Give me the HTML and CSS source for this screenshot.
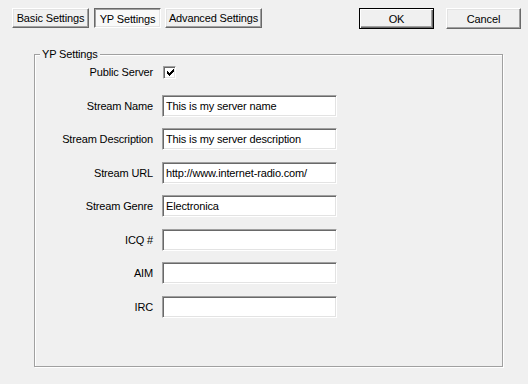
FILE: index.html
```
<html>
	<head>
		<link rel="stylesheet" href="styles.css">
	</head>
	<body>
		<div class="topbar">
			<div class="tabs">
				<button class="btn tab tabBasic">Basic Settings</button>
				<button class="btn tab tabYp pressed">YP Settings</button>
				<button class="btn tab tabAdv">Advanced Settings</button>
			</div>
			<div class="actions">
				<button class="btn action default">OK</button>
				<button class="btn action">Cancel</button>
			</div>
		</div>
		<fieldset class="group">
			<legend>YP Settings</legend>
			<div class="form">
				<label>Public Server</label>
				<div class="checkCell">
					<span class="check">
						<svg width="7" height="7" viewBox="0 0 7 7" shape-rendering="crispEdges">
							<rect x="6" y="0" width="1" height="3" fill="#000"/>
							<rect x="5" y="1" width="1" height="3" fill="#000"/>
							<rect x="4" y="2" width="1" height="3" fill="#000"/>
							<rect x="3" y="3" width="1" height="3" fill="#000"/>
							<rect x="2" y="4" width="1" height="3" fill="#000"/>
							<rect x="1" y="3" width="1" height="3" fill="#000"/>
							<rect x="0" y="2" width="1" height="3" fill="#000"/>
						</svg>
					</span>
				</div>
				<label>Stream Name</label>
				<input class="field" value="This is my server name">
				<label>Stream Description</label>
				<input class="field" value="This is my server description">
				<label>Stream URL</label>
				<input class="field" value="http://www.internet-radio.com/">
				<label>Stream Genre</label>
				<input class="field" value="Electronica">
				<label>ICQ #</label>
				<input class="field" value="">
				<label>AIM</label>
				<input class="field" value="">
				<label>IRC</label>
				<input class="field" value="">
			</div>
		</fieldset>
	</body>
</html>
```

FILE: styles.css
```
body{
	margin:0;
	background-color:#f0f0f0;
	font-family: "Liberation Sans", Arial, sans-serif;
	font-size:11px;
	letter-spacing:-0.15px;
	color:#000;
}
.topbar{
	display:flex;
	justify-content:space-between;
	padding:8px 7px 0 12px;
}
.tabs{
	display:flex;
	align-items:flex-start;
}
.actions{
	display:flex;
	gap:12px;
}
.btn{
	box-sizing:border-box;
	font-family: "Liberation Sans", Arial, sans-serif;
	font-size:11px;
	letter-spacing:-0.15px;
	color:#000;
	background-color:#f0f0f0;
	border:1px solid;
	border-color:#fff #696969 #696969 #fff;
	box-shadow: inset -1px -1px 0 #a0a0a0, inset 1px 1px 0 #e3e3e3;
	padding:0;
	margin:0;
}
.tab{
	height:20px;
}
.tabBasic{
	width:77px;
}
.tabYp{
	width:67px;
	margin-left:5px;
}
.tabAdv{
	width:97px;
	margin-left:4px;
}
.pressed{
	background-color:#f9f9f9;
	border-color:#696969 #fff #fff #696969;
	box-shadow: inset 1px 1px 0 #a0a0a0, inset -1px -1px 0 #e3e3e3;
	padding-top:1px;
}
.action{
	width:75px;
	height:21px;
}
.default{
	border:1px solid #000;
	box-shadow: inset 1px 1px 0 #fff, inset -1px -1px 0 #696969, inset -2px -2px 0 #a0a0a0;
}
.group{
	box-sizing:border-box;
	width:469px;
	height:319px;
	margin:19px 0 0 34px;
	padding:0;
	border:1px solid #a0a0a0;
	box-shadow: inset 1px 1px 0 #fff, 1px 1px 0 #fff;
}
.group legend{
	margin-left:5px;
	padding:0 2px 0 2px;
	line-height:13px;
	background-color:#f0f0f0;
}
.form{
	display:grid;
	grid-template-columns:119px 175px;
	grid-auto-rows:22px;
	column-gap:8px;
	row-gap:11.5px;
	align-items:center;
}
.form label{
	text-align:right;
	padding-right:1px;
}
.checkCell{
	display:flex;
	align-items:center;
	padding-left:1px;
}
.check{
	box-sizing:border-box;
	width:13px;
	height:13px;
	background-color:#fff;
	border:1px solid;
	border-color:#a0a0a0 #fff #fff #a0a0a0;
	box-shadow: inset 1px 1px 0 #696969, inset -1px -1px 0 #e3e3e3;
	display:flex;
	align-items:center;
	justify-content:center;
}
.check svg{
	display:block;
	margin:1px 0 0 1px;
}
.field{
	box-sizing:border-box;
	width:175px;
	height:22px;
	margin:0;
	padding:0 3px;
	font-family: "Liberation Sans", Arial, sans-serif;
	font-size:11px;
	letter-spacing:-0.15px;
	color:#000;
	background-color:#fff;
	border:1px solid;
	border-color:#a0a0a0 #fff #fff #a0a0a0;
	box-shadow: inset 1px 1px 0 #696969, inset -1px -1px 0 #e3e3e3;
	outline:none;
}
```
